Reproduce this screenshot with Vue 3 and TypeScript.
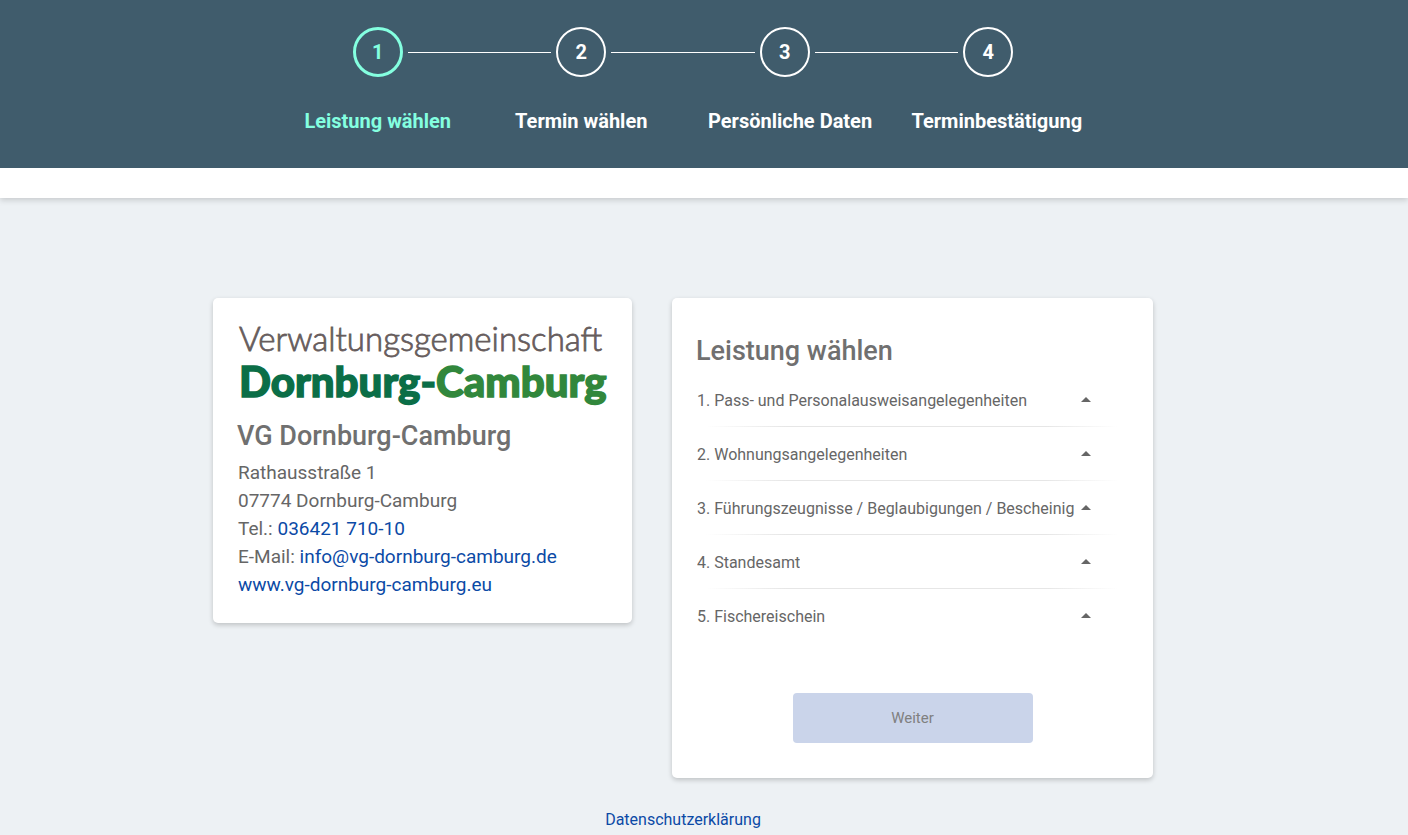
<script setup lang="ts">
import { ref } from 'vue'

const steps: string[] = ['Leistung wählen', 'Termin wählen', 'Persönliche Daten', 'Terminbestätigung']
const current = ref(0)

const services: string[] = [
  '1. Pass- und Personalausweisangelegenheiten',
  '2. Wohnungsangelegenheiten',
  '3. Führungszeugnisse / Beglaubigungen / Bescheinig',
  '4. Standesamt',
  '5. Fischereischein',
]
</script>

<template>
  <div class="page">
    <header class="header">
      <div class="banner">
        <div class="frame">
          <ol class="steps">
            <li v-for="(step, i) in steps" :key="step" class="step" :class="{ active: i === current }">
              <div class="marker"><span class="circle">{{ i + 1 }}</span></div>
              <span class="label">{{ step }}</span>
            </li>
          </ol>
        </div>
      </div>
    </header>

    <div class="frame">
      <main class="content">
        <section class="card contact">
          <svg class="logo" viewBox="0 0 371 96" role="img" aria-label="Verwaltungsgemeinschaft Dornburg-Camburg">
            <text class="logo-top" x="2" y="35">Verwaltungsgemeinschaft</text>
            <text class="logo-name" x="2" y="81"><tspan class="dark">Dornburg-</tspan><tspan class="light">Camburg</tspan></text>
          </svg>
          <h2 class="title">VG Dornburg-Camburg</h2>
          <address class="address">
            Rathausstraße 1<br>
            07774 Dornburg-Camburg<br>
            Tel.: <a href="tel:03642171010">036421 710-10</a><br>
            E-Mail: <a href="mailto:info@vg-dornburg-camburg.de">info@vg-dornburg-camburg.de</a><br>
            <a href="#web">www.vg-dornburg-camburg.eu</a>
          </address>
        </section>

        <section class="card services">
          <h2 class="title">Leistung wählen</h2>
          <ul class="list">
            <li v-for="service in services" :key="service" class="item">
              <button type="button" class="toggle" aria-expanded="false">
                <span class="name">{{ service }}</span>
                <svg class="arrow" width="10" height="5" viewBox="0 0 10 5" aria-hidden="true">
                  <path d="M0 5 L5 0 L10 5 Z" fill="currentColor" />
                </svg>
              </button>
            </li>
          </ul>
          <button type="button" class="next" disabled>Weiter</button>
        </section>
      </main>

      <footer class="footer"><a href="#datenschutz">Datenschutzerklärung</a></footer>
    </div>
  </div>
</template>

<style>
body {
  background: #edf1f4;
}
</style>

<style scoped>
.page {
  font-family: Roboto, "Liberation Sans", sans-serif;
  color: #666;
}

.page *,
.page *::before,
.page *::after {
  box-sizing: border-box;
}

a {
  color: #0b4aa6;
  text-decoration: none;
}

.header {
  background: #fff;
  padding-bottom: 30px;
  box-shadow: 0 2px 6px rgba(0, 0, 0, 0.17);
}

.banner {
  background: #405c6c;
  padding: 27px 0 32px;
}

.frame {
  max-width: 1366px;
}

.steps {
  display: grid;
  grid-template-columns: repeat(4, minmax(0, 1fr));
  max-width: 814px;
  margin: 0 auto;
  padding: 0;
  list-style: none;
  color: #fff;
}

.step {
  text-align: center;
}

.marker {
  display: flex;
  align-items: center;
  gap: 5px;
  margin-bottom: 30px;
}

.marker::before,
.marker::after {
  content: "";
  flex: 1;
  height: 1px;
  background: #fff;
}

.step:first-child .marker::before,
.step:last-child .marker::after {
  background: transparent;
}

.circle {
  width: 50px;
  height: 50px;
  border: 2px solid currentColor;
  border-radius: 50%;
  display: flex;
  align-items: center;
  justify-content: center;
  font-size: 20px;
  font-weight: 700;
}

.active {
  color: #84ffe0;
}

.active .circle {
  border-width: 3px;
}

.label {
  display: block;
  padding: 0 25px;
  font-size: 20px;
  line-height: 29px;
  font-weight: 700;
  white-space: nowrap;
}

.content {
  display: grid;
  grid-template-columns: 419fr 481fr;
  gap: 40px;
  align-items: start;
  max-width: 940px;
  margin: 100px auto 0;
}

.card {
  background: #fff;
  border-radius: 5px;
  box-shadow: 0 2px 5px rgba(0, 0, 0, 0.2);
}

.contact {
  padding: 18px 24px 24px;
}

.logo {
  display: block;
  width: 100%;
  height: auto;
  overflow: visible;
}

.logo-top {
  font-family: Lato, sans-serif;
  font-weight: 300;
  font-size: 33px;
  fill: #665c5c;
  stroke: #665c5c;
  stroke-width: 0.8px;
}

.logo-name {
  font-family: Lato, sans-serif;
  font-weight: 900;
  font-size: 42px;
  stroke-width: 1.4px;
}

.dark {
  fill: #0b6e47;
  stroke: #0b6e47;
}

.light {
  fill: #31873c;
  stroke: #31873c;
}

.title {
  margin: 0;
  font-size: 27px;
  line-height: 36px;
  font-weight: 500;
  color: #707070;
}

.contact .title {
  margin: 6px 0 5px;
}

.address {
  padding-left: 1px;
  font-style: normal;
  font-size: 19px;
  line-height: 28px;
}

.services {
  padding: 35px 24px;
}

.list {
  margin: 3px 0 51px;
  padding: 0;
  list-style: none;
}

.item + .item {
  background: linear-gradient(to right, transparent 10px, #e6e6e6 90px, #e6e6e6 350px, transparent 422px) no-repeat 0 0 / 100% 1px;
}

.toggle {
  display: flex;
  align-items: center;
  justify-content: space-between;
  width: 100%;
  height: 54px;
  padding: 2px 38px 0 1px;
  border: 0;
  background: none;
  color: inherit;
  font: inherit;
  font-size: 16px;
  text-align: left;
  cursor: pointer;
}

.name {
  white-space: nowrap;
  overflow: hidden;
}

.arrow {
  flex: none;
  margin-bottom: 2px;
}

.next {
  display: block;
  width: 240px;
  height: 50px;
  margin: 0 auto;
  border: 0;
  border-radius: 4px;
  background: #cad4ea;
  color: #808080;
  font: inherit;
  font-size: 15px;
}

.footer {
  padding: 31px 0 4px;
  text-align: center;
  font-size: 16px;
  line-height: 22px;
}
</style>
